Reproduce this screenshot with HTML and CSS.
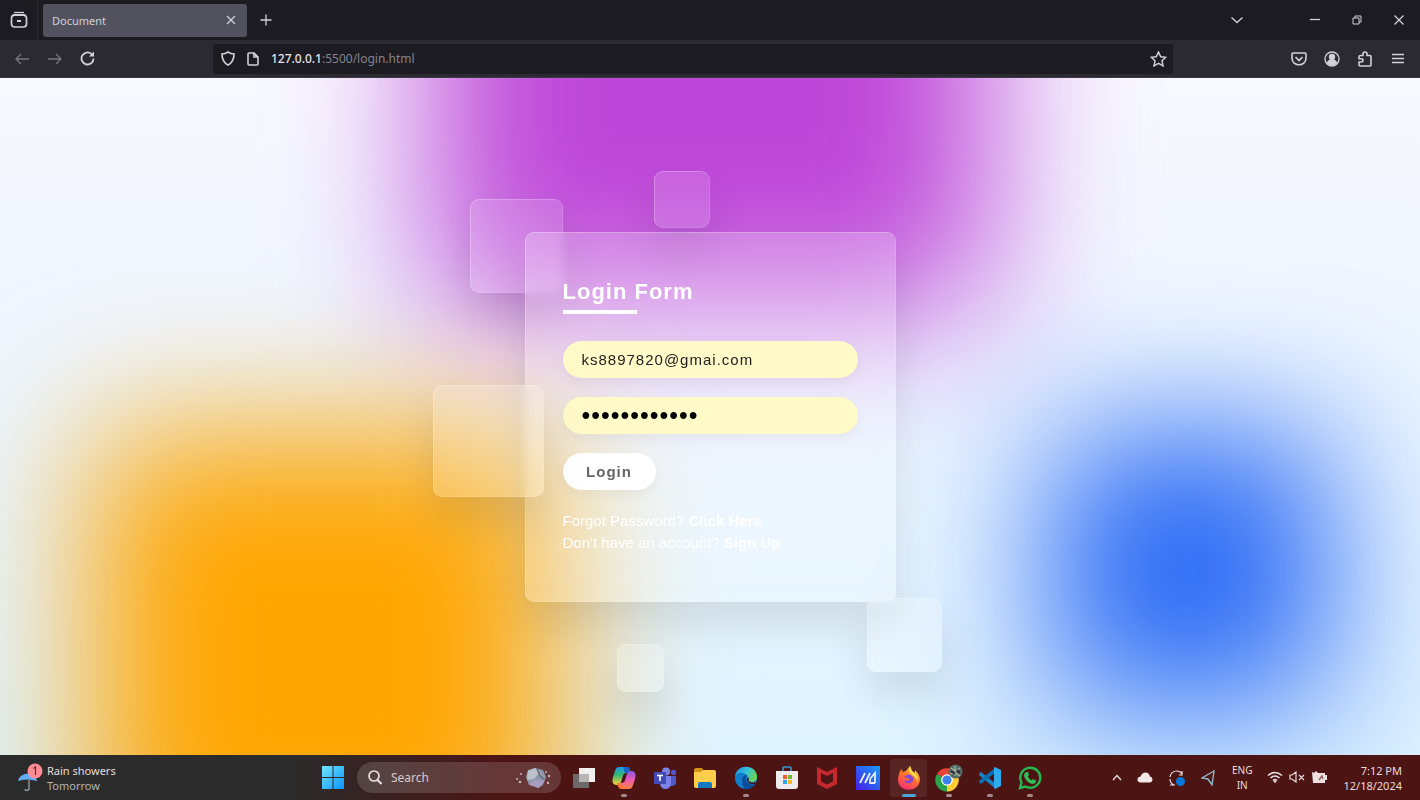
FILE: index.html
```html
<!DOCTYPE html>
<html lang="en">
<head>
<meta charset="utf-8">
<title>Document</title>
<link rel="stylesheet" href="styles.css">
</head>
<body>
<div class="tabbar">
  <button class="icon-btn view-btn" aria-label="View"><svg width="18" height="18" viewBox="0 0 18 18"><path d="M4 1.500h10"/><rect x="1.500" y="4" width="15" height="12" rx="3" stroke-width="1.700"/><path d="M2.500 5l1.500-1h10l1.500 1M7 10h4" stroke-width="2"/></svg></button>
  <div class="tab"><span>Document</span><button class="icon-btn tab-close" aria-label="Close tab"><svg width="10" height="10" viewBox="0 0 10 10"><path d="M1 1l8 8M9 1L1 9"/></svg></button></div>
  <button class="icon-btn new-tab" aria-label="New tab"><svg width="12" height="12" viewBox="0 0 12 12"><path d="M6 .5v11M.5 6h11"/></svg></button>
  <div class="window-controls">
    <button class="icon-btn list-tabs" aria-label="List tabs"><svg width="14" height="8" viewBox="0 0 14 8"><path d="M1.500 1.500l5.500 5 5.500-5"/></svg></button>
    <button class="icon-btn" aria-label="Minimize"><svg width="10" height="10" viewBox="0 0 10 10"><path d="M0 4.500h10"/></svg></button>
    <button class="icon-btn" aria-label="Restore"><svg width="10" height="10" viewBox="0 0 10 10"><path d="M1 3h6v6H1zM3 3V1h6v6H7" stroke-width="1"/></svg></button>
    <button class="icon-btn" aria-label="Close"><svg width="10" height="10" viewBox="0 0 10 10"><path d="M.5.500l9 9M9.500.500l-9 9"/></svg></button>
  </div>
</div>
<div class="toolbar">
  <div class="nav">
    <button class="icon-btn dim" aria-label="Back"><svg width="14" height="12" viewBox="0 0 14 12"><path d="M14 6H1M6 1L1 6l5 5"/></svg></button>
    <button class="icon-btn dim" aria-label="Forward"><svg width="14" height="12" viewBox="0 0 14 12"><path d="M0 6h13M8 1l5 5-5 5"/></svg></button>
    <button class="icon-btn" aria-label="Reload"><svg width="15" height="15" viewBox="0 0 15 15"><path d="M13.500 7.500a6 6 0 1 1-2-4.500L13 4.500" stroke-width="1.800"/><path d="M14 .5v5H9z" fill="currentColor" stroke="none"/></svg></button>
  </div>
  <div class="urlbar">
    <svg width="14" height="15" viewBox="0 0 14 15"><path d="M7 1C5 2.500 3 3 1 3c0 5 1 8.500 6 11 5-2.500 6-6 6-11-2 0-4-.5-6-2z" stroke-width="1.600"/></svg>
    <svg width="12" height="14" viewBox="0 0 12 14"><path d="M1 2q0-1 1-1h5l4 4v7q0 1-1 1H2q-1 0-1-1zM7 1v4h4" stroke-width="1.600"/></svg>
    <span class="url"><b>127.0.0.1</b>:5500/login.html</span>
    <button class="icon-btn star" aria-label="Bookmark"><svg width="17" height="16" viewBox="0 0 17 16"><path d="M8.500 1l2.200 4.700 5 .6-3.700 3.500 1 5-4.500-2.500L4 14.800l1-5L1.300 6.300l5-.6z" stroke-width="1.500"/></svg></button>
  </div>
  <div class="tools">
    <button class="icon-btn" aria-label="Pocket"><svg width="16" height="14" viewBox="0 0 16 14"><path d="M1 2q0-1 1-1h12q1 0 1 1v4c0 9-14 9-14 0zM4.500 5L8 8.500 11.500 5" stroke-width="1.600"/></svg></button>
    <button class="icon-btn" aria-label="Account"><svg width="16" height="16" viewBox="0 0 16 16"><circle cx="8" cy="8" r="7"/><circle cx="8" cy="6" r="2.500" fill="currentColor"/><path d="M3.500 12q1-3 4.500-3t4.500 3q-4.500 4-9 0z" fill="currentColor"/></svg></button>
    <button class="icon-btn" aria-label="Extensions"><svg width="16" height="16" viewBox="0 0 16 16"><path d="M2 6q0-1.500 1.500-1.500H6V3q0-2 2-2t2 2v1.500h3q1 0 1 1V14q0 1-1 1H3q-1 0-1-1v-3h2q2 0 2-1.700T4 7.700H2z" stroke-width="1.600"/></svg></button>
    <button class="icon-btn" aria-label="Menu"><svg width="12" height="11" viewBox="0 0 12 11"><path d="M0 1.500h12M0 5.500h12M0 9.500h12" stroke-width="1.600"/></svg></button>
  </div>
</div>

<main class="page">
  <div class="color purple"></div>
  <div class="color orange"></div>
  <div class="color blue"></div>
  <div class="box">
    <div class="square sq-top"></div>
    <div class="square sq-left"></div>
    <form class="card">
      <h2>Login Form</h2>
      <input class="field" type="email" aria-label="Email" value="ks8897820@gmai.com">
      <input class="field" type="password" aria-label="Password" value="abcdefghijkl">
      <button class="login" type="button">Login</button>
      <p class="forget">Forgot Password? <a href="#">Click Here</a></p>
      <p>Don't have an account? <a href="#">Sign Up</a></p>
    </form>
    <div class="square sq-mid"></div>
    <div class="square sq-right"></div>
    <div class="square sq-bottom"></div>
  </div>
</main>

<footer class="taskbar">
  <div class="weather">
    <svg width="28" height="30" viewBox="0 0 28 30"><path d="M12 17v8q0 2.500-2 2.500T8 26" stroke="#8d9299" stroke-width="1.500"/><path d="M1 18C3 9 18 7 20 18q-10-3-19 0z" fill="#62aef4" stroke="none"/><circle cx="18" cy="8" r="7.500" fill="#ff8b94" stroke="none"/><path d="M16.500 5.500l2-1.500v8" stroke="#5b3035" stroke-width="1.200"/></svg>
    <div class="weather-text"><div>Rain showers</div><div class="sub">Tomorrow</div></div>
  </div>
  <button class="icon-btn start" aria-label="Start"><svg width="22" height="23" viewBox="0 0 22 23"><defs><linearGradient id="win" x1="0" y1="0" x2="1" y2="1"><stop stop-color="#70e5ff"/><stop offset="1" stop-color="#0a94ff"/></linearGradient></defs><path d="M0 0h10.500v11H0zM11.500 0H22v11H11.500zM0 12h10.500v11H0zM11.500 12H22v11H11.500z" fill="url(#win)" stroke="none"/></svg></button>
  <div class="search">
    <svg width="14" height="15" viewBox="0 0 14 15"><circle cx="6" cy="6" r="5" stroke-width="1.700"/><path d="M9.500 10l4 4" stroke-width="2"/></svg>
    <input type="text" aria-label="Search" placeholder="Search">
    <svg class="doodle" width="36" height="22" viewBox="0 0 36 22"><path d="M13 3l7-2 8 2 3 7-3 8-5 3-9-3-3-8z" fill="#8f98a8" stroke="none"/><path d="M13 4l7-3 4 5-5 6-7 1z" fill="#b9c1ca" stroke="none"/><path d="M14 17l7-4 8 1-5 7z" fill="#a99bc4" stroke="none"/><path d="M22 2l3 7 4 3" stroke="#626b7e"/><g fill="#c9b3b6" stroke="none"><circle cx="2" cy="12" r="1"/><circle cx="5" cy="15" r="1.300"/><circle cx="6" cy="7" r="1"/><circle cx="33" cy="16" r="1.200"/><circle cx="34" cy="9" r="1.200"/><circle cx="31" cy="5" r="1"/></g></svg>
  </div>
  <div class="apps">
    <button class="app" aria-label="Task view"><svg width="24" height="22" viewBox="0 0 24 22" stroke="none"><path d="M7 1h16v14H7z" fill="#f2efef"/><path d="M1 7h16v14H1z" fill="#6e6969"/><path d="M7 7h10v8H7z" fill="#b8b4b4"/></svg></button>
    <button class="app run" aria-label="Copilot"><svg width="24" height="24" viewBox="0 0 24 24"><defs><linearGradient id="cpa" x1="0" y1="0" x2="0" y2="1"><stop stop-color="#169bea"/><stop offset=".45" stop-color="#35b96f"/><stop offset="1" stop-color="#ffd03d"/></linearGradient><linearGradient id="cpb" x1="0" y1="0" x2="0" y2="1"><stop stop-color="#8d57ed"/><stop offset=".5" stop-color="#f05aaf"/><stop offset="1" stop-color="#ff8441"/></linearGradient></defs><g stroke="none"><path d="M7 1h8q2 0 3 3l1 3h-4c-4 0-4 3-5 6l-1 3q-1 3-4 3c-5 0-5-4-4-8l2-6q1-4 4-4z" fill="url(#cpa)"/><path d="M11 1h4q2 0 3 3l1 3h-6z" fill="#1864c9"/><path d="M17 23H9q-2 0-3-3l-1-3h4c4 0 4-3 5-6l1-3q1-3 4-3c5 0 5 4 4 8l-2 6q-1 4-4 4z" fill="url(#cpb)"/><path d="M5 17h4l3 6H9q-2 0-3-3z" fill="#ff743d"/></g></svg></button>
    <button class="app" aria-label="Teams"><svg width="24" height="22" viewBox="0 0 24 22" stroke="none"><circle cx="13" cy="4.500" r="4" fill="#7b83eb"/><circle cx="20.500" cy="5.500" r="2.700" fill="#5059c9"/><path d="M17 9h6v6q0 4-4 4h-2z" fill="#5059c9"/><path d="M7 9h11v7c0 8-11 8-11 0z" fill="#7b83eb"/><rect x="1" y="5" width="12" height="12" rx="1" fill="#414ab5"/><path d="M4 8.500h6M7 8.500V14" stroke="#fff" stroke-width="1.600"/></svg></button>
    <button class="app" aria-label="File Explorer"><svg width="24" height="22" viewBox="0 0 24 22" stroke="none"><path d="M1 3q0-2 2-2h6l2 3h11v8H1z" fill="#d49416"/><path d="M1 5l7 0 2-2h11q2 0 2 2v14q0 2-2 2H3q-2 0-2-2z" fill="#ffcf4b"/><path d="M5 21v-4q0-2 2-2h10q2 0 2 2v4z" fill="#1279c2"/></svg></button>
    <button class="app run" aria-label="Edge"><svg width="24" height="24" viewBox="0 0 24 24"><defs><linearGradient id="ed" x1="0" y1="0" x2="1" y2=".4"><stop stop-color="#178dd8"/><stop offset=".55" stop-color="#34c1dc"/><stop offset="1" stop-color="#64d55b"/></linearGradient></defs><g stroke="none"><circle cx="12" cy="12" r="11" fill="#107ccc"/><path d="M1 11C2-3 23-2 23 11c0 5-5 6-8 4-2-1 0-2-1-4-3-6-11-5-13 0z" fill="url(#ed)"/><path d="M8 15c0-4 2-6 5-6-2 3-1 8 3 9q3 1 5 0-4 6-10 5-3-3-3-8z" fill="#0b4f9c"/><path d="M14 11q2 3 0 4 4 3 8 1l-1 2q-8 1-8-5z" fill="#451318"/></g></svg></button>
    <button class="app" aria-label="Store"><svg width="24" height="24" viewBox="0 0 24 24"><path d="M8 6V2q0-1 1-1h6q1 0 1 1v4" stroke="#3896c9" stroke-width="1.600"/><g stroke="none"><path d="M1 5h22v15q0 3-3 3H4q-3 0-3-3z" fill="#eeecec"/><path d="M8 9h4v4H8z" fill="#ee5b35"/><path d="M13 9h4v4h-4z" fill="#73b936"/><path d="M8 14h4v4H8z" fill="#2ba5e3"/><path d="M13 14h4v4h-4z" fill="#f9b622"/></g></svg></button>
    <button class="app" aria-label="McAfee"><svg width="22" height="24" viewBox="0 0 22 24"><path d="M1 1l10 5L21 1v17l-10 5-10-5zM5 7v8.500l6 3 6-3V7l-6 3z" fill="#c5292e" fill-rule="evenodd" stroke="none"/></svg></button>
    <button class="app" aria-label="MyASUS"><svg width="24" height="24" viewBox="0 0 24 24"><defs><linearGradient id="as" x1="0" y1="1" x2="1" y2="0"><stop stop-color="#4a1ce8"/><stop offset="1" stop-color="#139dfa"/></linearGradient></defs><path d="M0 0h24v24H0z" fill="url(#as)" stroke="none"/><path d="M4 17l5-10M9 17l5-10M14 13l5-6v10M14 13v4h5" stroke="#e4eaff" stroke-width="1.800"/></svg></button>
    <button class="app active" aria-label="Firefox"><svg width="24" height="24" viewBox="0 0 24 24"><defs><linearGradient id="ff" x1=".8" y1="0" x2=".3" y2="1"><stop stop-color="#ffe34b"/><stop offset=".45" stop-color="#ff7a25"/><stop offset="1" stop-color="#f52b72"/></linearGradient></defs><g stroke="none"><path d="M2 8l2-5 2 3 3-1 4-5 2 5 3 2V4q5 5 5 10c-1 13-22 13-22 0q0-3 1-6z" fill="url(#ff)"/><path d="M7 11q5-5 9 0c2 7-7 9-9 3l4 1 2-2-3-1z" fill="#8748cf"/><path d="M13 0l2 5 3 2q4 4 2 10 0-6-5-8-4-3-2-9z" fill="#ffd849"/></g></svg></button>
    <button class="app run" aria-label="Chrome"><svg width="30" height="28" viewBox="0 0 30 28" stroke="none"><g><path d="M13 16L3 10a11.500 11.500 0 0 1 20 0z" fill="#ea4335"/><path d="M13 16l10-6a11.500 11.500 0 0 1-10 17.500z" fill="#ffcd32"/><path d="M13 16v11.500A11.500 11.500 0 0 1 3 10z" fill="#2ba24c"/><circle cx="13" cy="16" r="5.800" fill="#fff"/><circle cx="13" cy="16" r="4.600" fill="#3b82ef"/></g><circle cx="21.500" cy="7.500" r="7" fill="#526d68"/><path d="M17 4l4 3 5-3M16 10l5-1 5 3M21 2v10" stroke="#aab6a0" stroke-width="1.200"/><path d="M17 7l4 3M23 6l3 3" stroke="#34283b" stroke-width="2"/></svg></button>
    <button class="app run" aria-label="Visual Studio Code"><svg width="24" height="24" viewBox="0 0 24 24" stroke="none"><path d="M1 8l2-2 15 12v5L1 9z" fill="#1686cb"/><path d="M1 16l2 2L18 6V1L1 15z" fill="#0870b4"/><path d="M17 1l6 3v16l-6 3-1-1V2z" fill="#2daced"/></svg></button>
    <button class="app run" aria-label="WhatsApp"><svg width="24" height="24" viewBox="0 0 24 24"><path d="M2 22l1.500-5.500a10 10 0 1 1 4 4z" stroke="#24b851" stroke-width="2.400"/><path d="M8 6l2 0 1 3-1.200 1.500q1.200 2.500 3.800 3.700L15 13l3 1.500q0 3-3 3.500c-4 0-9-5-9-9q.5-2 2-3z" fill="#30bd58" stroke="none"/></svg></button>
  </div>
  <div class="tray">
    <svg width="10" height="7" viewBox="0 0 10 7"><path d="M1 6l4-4.500L9 6"/></svg>
    <svg width="16" height="11" viewBox="0 0 16 11"><path d="M4 10.500q-3.500 0-3.500-3Q.5 5 3.500 4.500 5 .500 8.500.500T13 4.500q2.500.5 2.500 3t-3 3z" fill="#f3e9e9" stroke="none"/></svg>
    <svg width="18" height="18" viewBox="0 0 18 18"><path d="M2 8q1-6 7-6 3 0 5 3V2m0 4h-3M2 10q0 4 4 6M2 16h5" stroke-width="1.200"/><circle cx="12.500" cy="12.500" r="4.500" fill="#0879d8" stroke="none"/></svg>
    <svg width="14" height="16" viewBox="0 0 14 16"><path d="M13 1L1 8l6 1 4 6z" stroke="#8fb8c6" stroke-width="1.400"/></svg>
    <div class="lang">ENG<br>IN</div>
    <div class="status">
      <svg width="16" height="12" viewBox="0 0 16 12"><path d="M1 4.500q7-6 14 0M3.500 7q4.500-4 9 0M6 9.500q2-2 4 0" stroke-width="1.600"/><circle cx="8" cy="10.500" r="1.300" fill="currentColor" stroke="none"/></svg>
      <svg width="16" height="12" viewBox="0 0 16 12"><path d="M1 4h2l4-3v10L3 8H1zM10 4l5 5M15 4l-5 5" stroke-width="1.200"/></svg>
      <svg width="17" height="13" viewBox="0 0 17 13"><path d="M1 1l2 1 2-2 2 2h7v2h2v5h-2v3H2z" fill="#eee1e1" stroke="none"/><path d="M8 9l3-4 1 3" stroke="#8e5b5b"/></svg>
    </div>
    <div class="clock">7:12 PM<br>12/18/2024</div>
  </div>
</footer>
</body>
</html>
```
FILE: styles.css
```css
* { box-sizing: border-box; margin: 0; padding: 0; }
body {
  min-height: 100vh;
  display: flex;
  flex-direction: column;
  overflow: hidden;
  font-family: "Liberation Sans", Arial, sans-serif;
}
svg { display: block; flex: none; fill: none; stroke: currentColor; stroke-width: 1.3; }
svg[stroke="none"] { stroke: none; }
button, input { font: inherit; color: inherit; border: 0; background: none; outline: 0; }
a { color: inherit; text-decoration: none; }
.icon-btn { display: flex; align-items: center; justify-content: center; }

/* Browser chrome */
.tabbar, .toolbar {
  display: flex;
  align-items: center;
  color: #d2d1d7;
  font-family: "Noto Sans", sans-serif;
  font-size: 11px;
}
.tabbar { height: 40px; background: #1c1b22; }
.view-btn { width: 38px; height: 40px; border-right: 1px solid #2a2931; }
.tab {
  width: 204px;
  height: 33px;
  margin-left: 5px;
  padding: 0 11px 0 9px;
  display: flex;
  align-items: center;
  justify-content: space-between;
  border-radius: 3px;
  background: #52515e;
}
.new-tab { width: 38px; height: 33px; }
.window-controls { margin-left: auto; display: flex; }
.window-controls .icon-btn { width: 42px; height: 36px; }
.window-controls .list-tabs { margin-right: 36px; }
.toolbar { height: 38px; background: #2b2a33; border-bottom: 1px solid #3a3941; }
.nav { width: 213px; padding-left: 5px; display: flex; }
.nav .icon-btn { width: 33px; height: 30px; }
.dim { color: #77767f; }
.urlbar {
  flex: 1;
  height: 30px;
  padding: 0 6px 0 8px;
  display: flex;
  align-items: center;
  gap: 12px;
  border-radius: 3px;
  background: #1c1b22;
}
.url { font-size: 12px; color: #85848c; }
.url b { font-weight: 500; color: #e4e3e8; }
.star { margin-left: auto; }
.tools { width: 247px; padding-right: 6px; display: flex; justify-content: flex-end; }
.tools .icon-btn { width: 33px; height: 30px; }

/* Login page */
.page {
  position: relative;
  flex: 1;
  display: flex;
  align-items: center;
  justify-content: center;
  overflow: hidden;
  background: linear-gradient(to bottom, #f8f8ff, #dff3ff);
}
.color { position: absolute; filter: blur(74px); }
.purple { top: -324px; left: calc(50% - 278px); width: 556px; height: 556px; background: #be46d8; }
.orange { bottom: -139px; left: 92px; width: 463px; height: 463px; background: #ffa500; }
.blue { bottom: 46px; right: 92px; width: 278px; height: 278px; background: #2968f5; }
.box { position: relative; }
.card, .square {
  border: 1px solid rgba(255, 255, 255, .25);
  border-right-color: rgba(255, 255, 255, .12);
  border-bottom-color: rgba(255, 255, 255, .12);
  border-radius: 9px;
  box-shadow: 0 23px 42px rgba(0, 0, 0, .1);
}
.card {
  position: relative;
  width: 371px;
  min-height: 370px;
  padding: 37px;
  display: flex;
  flex-direction: column;
  align-items: flex-start;
  justify-content: center;
  color: #fff;
  background: rgba(255, 255, 255, .22);
  backdrop-filter: blur(5px);
}
.square { position: absolute; background: rgba(255, 255, 255, .14); backdrop-filter: blur(5px); }
.sq-top { width: 56px; height: 57px; top: -61px; left: 129px; }
.sq-left { width: 93px; height: 94px; top: -33px; left: -55px; }
.sq-mid { width: 111px; height: 112px; top: 153px; left: -92px; background: rgba(255, 255, 255, .18); }
.sq-right { width: 75px; height: 74px; top: 366px; left: 342px; background: rgba(255, 255, 255, .2); }
.sq-bottom { width: 47px; height: 48px; top: 412px; left: 92px; background: rgba(255, 255, 255, .18); }
.card h2 {
  position: relative;
  margin-bottom: 36px;
  font-size: 22px;
  line-height: 26px;
  letter-spacing: 1px;
}
.card h2::after {
  content: "";
  position: absolute;
  left: 0;
  bottom: -9px;
  width: 74px;
  height: 4px;
  background: #fff;
}
.field {
  width: 100%;
  height: 37px;
  margin-bottom: 19px;
  padding: 0 19px;
  border-radius: 32px;
  background: #fffac8;
  color: #222;
  font-size: 15px;
  letter-spacing: 1px;
  box-shadow: 0 5px 14px rgba(0, 0, 0, .05);
}
.field[type="password"] { color: #000; font-size: 25px; }
.login {
  width: 93px;
  height: 37px;
  margin-bottom: 20px;
  border-radius: 32px;
  background: #fff;
  color: #666;
  font-size: 15px;
  font-weight: 700;
  letter-spacing: 1px;
  box-shadow: 0 5px 14px rgba(0, 0, 0, .05);
}
.card p { font-size: 15px; line-height: 22px; }
.card a { font-weight: 700; }

/* Taskbar */
.taskbar {
  height: 45px;
  display: flex;
  align-items: center;
  color: #e9dede;
  background: linear-gradient(to right, #2b2b2b 20%, #4d1414 36%, #4d1414);
  font-family: "Noto Sans", sans-serif;
  font-size: 11px;
  line-height: 15px;
}
.weather { width: 322px; padding-left: 17px; display: flex; align-items: center; gap: 2px; }
.sub { color: #b4b4b4; }
.search {
  width: 204px;
  height: 31px;
  margin: 0 4px 0 13px;
  padding: 0 10px 0 11px;
  display: flex;
  align-items: center;
  gap: 9px;
  border-radius: 16px;
  background: rgba(255, 255, 255, .15);
}
.search input { flex: 1; min-width: 0; font-size: 12px; }
.search input::placeholder { color: #d8cdcd; opacity: 1; }
.apps { width: 484px; display: flex; justify-content: space-between; }
.app {
  position: relative;
  width: 37px;
  height: 38px;
  display: flex;
  align-items: center;
  justify-content: center;
  border-radius: 3px;
}
.run::after, .active::after {
  content: "";
  position: absolute;
  bottom: 0;
  width: 6px;
  height: 3px;
  border-radius: 2px;
  background: #a58b8b;
}
.active { background: rgba(255, 255, 255, .07); }
.active::after { width: 14px; background: #4ba3dc; }
.tray { margin-left: auto; padding-right: 18px; display: flex; align-items: center; gap: 15px; }
.lang { margin-left: 2px; font-size: 10px; text-align: center; }
.status { display: flex; gap: 6px; }
.clock { font-size: 11px; text-align: right; }
```
